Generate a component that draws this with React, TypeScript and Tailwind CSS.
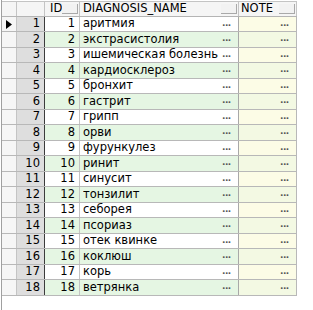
import React from "react";

const rows = [
  "аритмия",
  "экстрасистолия",
  "ишемическая болезнь",
  "кардиосклероз",
  "бронхит",
  "гастрит",
  "грипп",
  "орви",
  "фурункулез",
  "ринит",
  "синусит",
  "тонзилит",
  "себорея",
  "псориаз",
  "отек квинке",
  "коклюш",
  "корь",
  "ветрянка",
];

function HeaderBox() {
  return <span className="absolute right-[1px] bottom-[2px] w-[16px] h-[10px] border-b border-r border-[#a9a9a9] bg-[#f2f2f2]" />;
}

function Dots() {
  return <span className="w-[16px] shrink-0 text-[9px] leading-none font-bold text-[#555] tracking-[-0.5px] pb-[2px]">...</span>;
}

export default function App() {
  return (
    <div
      className="w-[313px] h-[310px] bg-white text-black text-[11.5px] overflow-hidden"
      style={{ fontFamily: '"DejaVu Sans", sans-serif' }}
    >
      <div className="ml-[1px] h-full border-l border-[#a0a0a0] pt-[1px]">
        <div className="w-[295px] border-t border-[#c4c4c4]">
          {/* header */}
          <div className="flex h-[15px] border-b border-[#b4b4b4] bg-[#f5f5f5]">
            <div className="w-[15px] border-r border-[#c4c4c4]" />
            <div className="w-[28px] border-r border-[#c4c4c4]" />
            <div className="relative w-[35px] border-r border-[#c4c4c4] pl-[5px] flex items-center">
              ID
              <HeaderBox />
            </div>
            <div className="relative w-[159px] border-r border-[#c4c4c4] pl-[3px] flex items-center">
              DIAGNOSIS_NAME
              <HeaderBox />
            </div>
            <div className="relative w-[58px] border-r border-[#c4c4c4] pl-[2px] flex items-center">
              NOTE
              <HeaderBox />
            </div>
          </div>

          {rows.map((name, i) => {
            const even = i % 2 === 1;
            return (
              <div
                key={i}
                className={`flex ${even ? "h-[16px]" : "h-[15px]"} border-b border-[#b8b8b8]`}
              >
                <div className="w-[15px] border-r border-[#c4c4c4] bg-[#f6f6f6] flex items-center pl-[4px]">
                  {i === 0 && (
                    <svg width="6" height="9" viewBox="0 0 6 9">
                      <polygon points="0,0 6,4.5 0,9" fill="#000" />
                    </svg>
                  )}
                </div>
                <div className="w-[28px] border-r border-[#3c3c3c] bg-[#dedede] flex items-center justify-end pr-[4px]">
                  {i + 1}
                </div>
                <div
                  className={`w-[35px] border-r border-[#c4c4c4] flex items-center justify-end pr-[4px] ${
                    even ? "bg-[#e5f6e3]" : "bg-white"
                  }`}
                >
                  {i + 1}
                </div>
                <div
                  className={`w-[159px] border-r border-[#a8a8a8] flex items-center pl-[3px] ${
                    even ? "bg-[#e5f6e3]" : "bg-white"
                  }`}
                >
                  <span className="flex-1 overflow-hidden whitespace-nowrap">{name}</span>
                  <Dots />
                </div>
                <div
                  className={`w-[58px] border-r border-[#b8b8b8] flex items-center justify-end ${
                    even ? "bg-[#f3f9e3]" : "bg-[#fcfce6]"
                  }`}
                >
                  <Dots />
                </div>
              </div>
            );
          })}
        </div>
      </div>
    </div>
  );
}
